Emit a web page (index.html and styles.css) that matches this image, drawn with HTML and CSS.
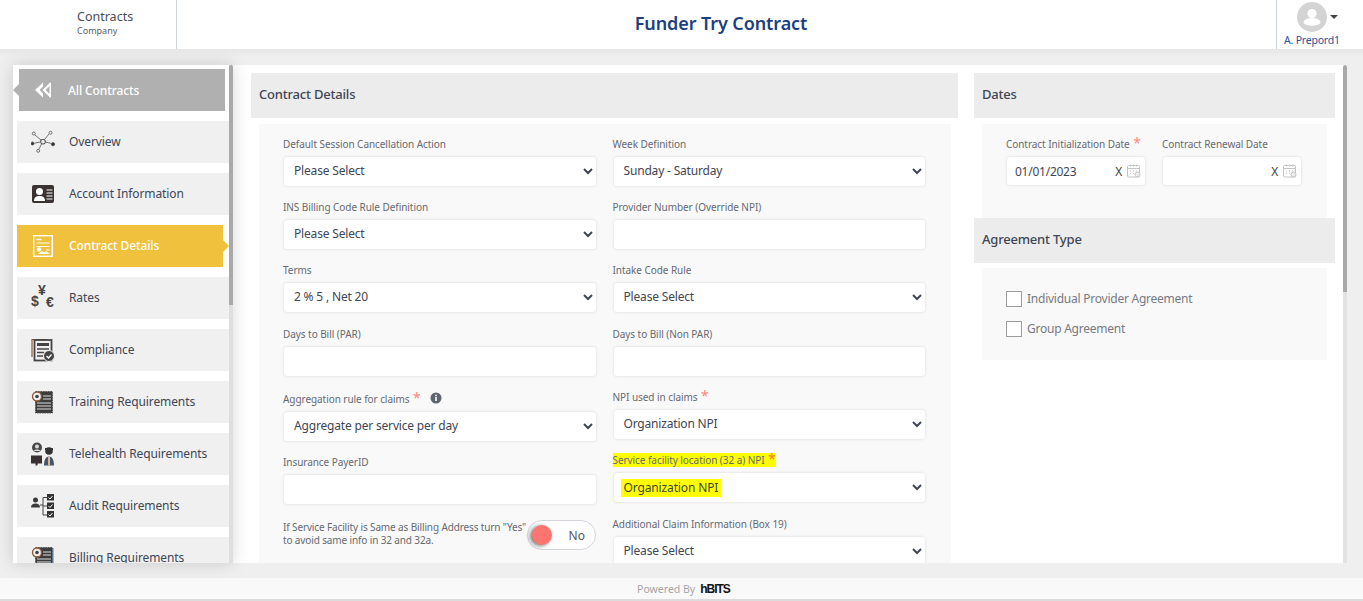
FILE: index.html
```html
<!DOCTYPE html>
<html lang="en">
<head>
<meta charset="utf-8">
<title>Funder Try Contract</title>
<link rel="stylesheet" href="styles.css">
</head>
<body>
<header class="topbar">
  <div class="brand">
    <div class="brand-title">Contracts</div>
    <div class="brand-sub">Company</div>
  </div>
  <h1 class="page-title">Funder Try Contract</h1>
  <div class="user">
    <div class="user-top">
      <svg class="avatar" viewBox="0 0 30 30"><circle cx="15" cy="15" r="15" fill="#d4d4d4"/><circle cx="15" cy="11.5" r="4.6" fill="#fff"/><path d="M6.5 21c0-3.500 4-5 8.500-5s8.500 1.500 8.500 5c-2 1.800-5 2.800-8.500 2.800S8.500 22.800 6.500 21z" fill="#fff"/></svg>
      <span class="caret"></span>
    </div>
    <div class="user-name">A. Prepord1</div>
  </div>
</header>

<div class="workspace">
  <nav class="sidebar">
    <div class="nav-scroll">
      <a class="back-item"><svg class="back-icon" viewBox="0 0 16 16"><path d="M8 .5 0 8l8 7.500V11.500L4.500 8 8 4.500z" fill="#fff"/><path d="M15 .5 7.500 8l7.500 7.500h1V.5zM14.500 4v8L10.500 8z" fill="#fff" fill-rule="evenodd"/></svg><span>All Contracts</span></a>

      <a class="nav-item"><svg class="nav-icon" viewBox="0 0 24 24" fill="none" stroke="#555" stroke-width=".8"><rect x="9.800" y="9.500" width="4.400" height="4.400" rx="1.500" stroke="#333" stroke-width="1"/><circle cx="2.800" cy="3.500" r="1.500"/><circle cx="19.500" cy="2.700" r="1.500"/><circle cx="7.200" cy="20.800" r="1.500"/><circle cx="1.500" cy="13.500" r="1.500" fill="#2b2b2b"/><circle cx="22" cy="14.200" r="1.600" fill="#2b2b2b"/><path d="M4 5l6 5M18 4l-4.500 5.500M3.500 13.200 9.500 12M20.500 13.500 14.500 12M8 19l2.500-5"/></svg><span class="nav-text">Overview</span></a>

      <a class="nav-item"><svg class="nav-icon" viewBox="0 0 24 24"><rect x="1" y="3" width="22" height="18" rx="2" fill="#3a3332"/><circle cx="8.500" cy="9.500" r="3.500" fill="#fff"/><path d="M3 19c0-4 2.500-5 5.500-5s5.500 1 5.500 5z" fill="#fff"/><path d="M15.500 8h6M15.500 11h6M15.500 14h6M15.500 17h6" stroke="#bbb" stroke-width="1.400"/></svg><span class="nav-text">Account Information</span></a>

      <a class="nav-item is-active"><svg class="nav-icon" viewBox="0 0 24 24" fill="none" stroke="#fff" stroke-width="1.400"><rect x="2.700" y="1.700" width="18.600" height="20.600"/><path d="M5.500 5.500h5" stroke-width="1.500"/><path d="M5.500 9h13M5.500 12.500h13M15 16h3.500" stroke-width="1.100"/><circle cx="8" cy="15.500" r="2.200" fill="#fff" stroke="none"/><path d="M7 20l4-3 2 1.500 2-1.500 4 3z" fill="#fff" stroke="none"/></svg><span class="nav-text">Contract Details</span></a>

      <a class="nav-item"><span class="nav-icon money"><b class="yen">¥</b><b class="dollar">$</b><b class="euro">€</b></span><span class="nav-text">Rates</span></a>

      <a class="nav-item"><svg class="nav-icon" viewBox="0 0 24 24"><path d="M1 19V1.500h15" fill="none" stroke="#8a5a3c" stroke-width="1.200"/><rect x="3.500" y="2" width="17" height="20.500" fill="none" stroke="#444" stroke-width="1.800"/><path d="M6 5h12v3H6z" fill="#444"/><path d="M6 11h12M6 14.500h7M6 18h6" stroke="#444" stroke-width="1.600"/><circle cx="18" cy="18" r="5.500" fill="#444" stroke="#f0f0f0"/><path d="M15.500 18l2 2 3-3.500" fill="none" stroke="#fff" stroke-width="1.300"/></svg><span class="nav-text">Compliance</span></a>

      <a class="nav-item"><svg class="nav-icon" viewBox="0 0 24 24"><rect x="4.500" y="1.500" width="17" height="21.500" fill="#3c3c3c" stroke="#555" stroke-dasharray="1.500 1"/><path d="M12 6h8M12 9h8M6 13h14M6 16h14M6 19h14" stroke="#ddd" stroke-width="1"/><circle cx="6" cy="6.500" r="4.500" fill="#f0f0f0" stroke="#8a5a3c" stroke-width="1.300"/><circle cx="6" cy="6.500" r="1.800" fill="#444"/></svg><span class="nav-text">Training Requirements</span></a>

      <a class="nav-item"><svg class="nav-icon" viewBox="0 0 24 24"><circle cx="6" cy="5.500" r="5" fill="#4a4a4a"/><circle cx="6" cy="4.500" r="2" fill="#ddd"/><path d="M2.500 9c1-2 6-2 7 0z" fill="#ddd"/><rect x="0" y="13.500" width="11" height="8" fill="#3a3030"/><rect x="4.500" y="21" width="2" height="2.500" fill="#3a3030"/><circle cx="18" cy="9" r="3.800" fill="#333"/><path d="M14 7h8" stroke="#333" stroke-width="2"/><path d="M13 23.500c0-6 2-9 5-9s5 3 5 9z" fill="#44566a"/><path d="M17 15h2v8.500h-2z" fill="#d8b998"/></svg><span class="nav-text">Telehealth Requirements</span></a>

      <a class="nav-item"><svg class="nav-icon" viewBox="0 0 24 24"><circle cx="4.500" cy="6" r="2.500" fill="#3a3a3a"/><path d="M0 13.500c0-3 2-4 4.500-4s4.500 1 4.500 4z" fill="#3a3a3a"/><path d="M9 11h3M12 3.500v17.500M12 3.500h4M12 12h4M12 21h4" stroke="#444" stroke-width="1" fill="none"/><rect x="16" y="0" width="7" height="6.500" fill="#333"/><rect x="16" y="8.500" width="7" height="6.500" fill="#333"/><rect x="16" y="17" width="7" height="6.500" fill="#333"/><path d="M17.500 3.500l1.500 1.500 2.500-3M17.500 12l1.500 1.500 2.500-3M17.500 20.500 19 22l2.500-3" stroke="#fff" fill="none" stroke-width="1"/></svg><span class="nav-text">Audit Requirements</span></a>

      <a class="nav-item"><svg class="nav-icon" viewBox="0 0 24 24"><rect x="4.500" y="1.500" width="17" height="21.500" fill="#3c3c3c" stroke="#555" stroke-dasharray="1.500 1"/><path d="M12 6h8M12 9h8M6 13h14M6 16h14M6 19h14" stroke="#ddd" stroke-width="1"/><path d="M22 2v21" stroke="#4a7fb0"/><circle cx="6" cy="6.500" r="4.500" fill="#f0f0f0" stroke="#8a5a3c" stroke-width="1.300"/><circle cx="6" cy="6.500" r="1.800" fill="#444"/></svg><span class="nav-text">Billing Requirements</span></a>
    </div>
  </nav>

  <main class="main">
    <section class="details">
      <h2 class="section-head">Contract Details</h2>
      <div class="details-body">
        <div class="col col-left">
          <div class="field"><label>Default Session Cancellation Action</label><select><option>Please Select</option></select></div>
          <div class="field"><label>INS Billing Code Rule Definition</label><select><option>Please Select</option></select></div>
          <div class="field"><label>Terms</label><select><option>2 % 5 , Net 20</option></select></div>
          <div class="field"><label>Days to Bill (PAR)</label><input type="text"></div>
          <div class="field field-tall"><label>Aggregation rule for claims <i class="req">*</i>
            <svg class="info" viewBox="0 0 12 12"><circle cx="6" cy="6" r="5.500" fill="#5f6570"/><rect x="5.200" y="5" width="1.600" height="4" fill="#fff"/><rect x="5.200" y="2.700" width="1.600" height="1.500" fill="#fff"/></svg></label><select><option>Aggregate per service per day</option></select></div>
          <div class="field"><label>Insurance PayerID</label><input type="text"></div>
          <div class="toggle-row">
            <p class="toggle-text">If Service Facility is Same as Billing Address turn "Yes"<br>to avoid same info in 32 and 32a.</p>
            <div class="toggle"><span class="knob"></span><span class="toggle-label">No</span></div>
          </div>
        </div>
        <div class="col col-right">
          <div class="field"><label>Week Definition</label><select><option>Sunday - Saturday</option></select></div>
          <div class="field"><label>Provider Number (Override NPI)</label><input type="text"></div>
          <div class="field"><label>Intake Code Rule</label><select><option>Please Select</option></select></div>
          <div class="field"><label>Days to Bill (Non PAR)</label><input type="text"></div>
          <div class="field"><label>NPI used in claims <i class="req">*</i></label><select><option>Organization NPI</option></select></div>
          <div class="field highlighted">
            <label><mark>Service facility location (32 a) NPI <i class="req req-hl">*</i></mark></label>
            <div class="select-wrap"><select><option></option></select><mark class="select-mark">Organization NPI</mark></div>
          </div>
          <div class="field"><label>Additional Claim Information (Box 19)</label><select><option>Please Select</option></select></div>
        </div>
      </div>
    </section>

    <aside class="side-sections">
      <h2 class="section-head">Dates</h2>
      <div class="dates-body">
        <div class="date-field">
          <label>Contract Initialization Date <i class="req">*</i></label>
          <div class="date-input"><span class="date-value">01/01/2023</span><span class="clear">X</span>
            <svg class="cal" viewBox="0 0 14 14" fill="none" stroke="#c4c4c4"><rect x=".5" y="1.500" width="12" height="11.500" rx="1"/><path d="M.5 4.500h12M3.500 .5v2M6.500 .5v2M9.500 .5v2M3 7h1M6 7h1M9 7h1M3 9.500h1M6 9.500h1"/><circle cx="10.500" cy="10.500" r="2.500" fill="#eee"/></svg></div>
        </div>
        <div class="date-field">
          <label>Contract Renewal Date</label>
          <div class="date-input"><span class="date-value"></span><span class="clear">X</span>
            <svg class="cal" viewBox="0 0 14 14" fill="none" stroke="#c4c4c4"><rect x=".5" y="1.500" width="12" height="11.500" rx="1"/><path d="M.5 4.500h12M3.500 .5v2M6.500 .5v2M9.500 .5v2M3 7h1M6 7h1M9 7h1M3 9.500h1M6 9.500h1"/><circle cx="10.500" cy="10.500" r="2.500" fill="#eee"/></svg></div>
        </div>
      </div>
      <h2 class="section-head">Agreement Type</h2>
      <div class="agreement-body">
        <label class="check"><span class="box"></span>Individual Provider Agreement</label>
        <label class="check"><span class="box"></span>Group Agreement</label>
      </div>
    </aside>
    <div class="main-scroll"></div>
  </main>
</div>

<footer class="footer"><span>Powered By</span><b class="hbits">hBITS</b></footer>
</body>
</html>
```

FILE: styles.css
```css
* { box-sizing: border-box; }
html, body { margin: 0; height: 601px; overflow: hidden; }
body {
  display: flex;
  flex-direction: column;
  font-family: "Noto Sans", sans-serif;
  background: #ececec;
  color: #3f4655;
}

/* Header */
.topbar {
  height: 49px;
  flex: none;
  background: #fff;
  display: flex;
  align-items: stretch;
}
.brand {
  width: 177px;
  padding: 9px 0 0 77px;
  border-right: 1px solid #ced3da;
  flex: none;
}
.brand-title { font-size: 12.500px; line-height: 16px; color: #4a4f58; }
.brand-sub { font-size: 9px; line-height: 12px; color: #5c6068; }
.page-title {
  flex: 1;
  margin: 0;
  padding-right: 11px;
  text-align: center;
  font-size: 18px;
  letter-spacing: -.1px;
  line-height: 47px;
  font-weight: 600;
  color: #1d3f80;
}
.user {
  width: 87px;
  flex: none;
  border-left: 1px solid #ced3da;
  padding: 2px 0 0 7px;
}
.user-top { display: flex; align-items: center; padding-left: 13px; }
.avatar { width: 30px; height: 30px; display: block; }
.caret {
  margin-left: 3px;
  border: 4px solid transparent;
  border-top-color: #444;
  border-bottom: 0;
}
.user-name { font-size: 10.500px; letter-spacing: -.2px; line-height: 14px; color: #2a5296; margin-top: 1px; }

/* Workspace */
.workspace {
  height: 529px;
  flex: none;
  padding: 16px 16px 15px 13px;
  display: flex;
  background: linear-gradient(#e6e6e6, #efefef 8px);
}
.sidebar {
  width: 220px;
  flex: none;
  background: #fff;
  padding-right: 4px;
  box-shadow: 0 0 16px rgba(0,0,0,.16);
  position: relative;
  z-index: 1;
}
.sidebar::before,
.sidebar::after {
  content: "";
  position: absolute;
  right: 0;
  top: 0;
  width: 4px;
}
.sidebar::before { bottom: 0; background: #dfdfdf; }
.sidebar::after { height: 240px; background: #a9a9a9; border-radius: 2px 2px 0 0; }
.nav-scroll {
  height: 100%;
  overflow: hidden;
  padding: 4px 0 0 4px;
  display: flex;
  flex-direction: column;
  gap: 10px;
}
.nav-item, .back-item {
  height: 42px;
  flex: none;
  display: flex;
  align-items: center;
  font-size: 12px;
  letter-spacing: -.1px;
  position: relative;
}
.nav-text { padding-bottom: 2px; }
.nav-item { background: #f0f0f0; padding-left: 14px; color: #3f4655; }
.nav-icon { width: 24px; height: 24px; margin-right: 14px; flex: none; display: block; }
.back-item {
  margin-left: 2px;
  width: 206px;
  background: #b0b0b0;
  color: #fff;
  font-weight: 500;
  padding-left: 16px;
}
.back-item::before {
  content: "";
  position: absolute;
  left: -6px;
  top: 15px;
  border: 6px solid transparent;
  border-right-color: #b0b0b0;
  border-left: 0;
}
.back-icon { width: 16px; height: 16px; margin-right: 17px; }
.is-active {
  background: #f0c13c;
  color: #fff;
  width: 206px;
  font-weight: 500;
}
.is-active::after {
  content: "";
  position: absolute;
  right: -6px;
  top: 15px;
  border: 6px solid transparent;
  border-left-color: #f0c13c;
  border-right: 0;
}
.money { position: relative; }
.money b { position: absolute; font-family: "Liberation Sans", sans-serif; font-weight: 700; color: #444; font-size: 14px; line-height: 14px; }
.yen { left: 7px; top: -3px; }
.dollar { left: 0; top: 8px; }
.euro { left: 15px; top: 9px; }

/* Main panel */
.main {
  flex: 1;
  min-width: 0;
  background: #fff;
  display: flex;
  padding: 8px 12px 0 18px;
  gap: 16px;
  overflow: hidden;
  position: relative;
}
.main-scroll {
  position: absolute;
  right: 0;
  top: 0;
  bottom: 0;
  width: 4px;
  background: linear-gradient(#a9a9a9 227px, #e2e2e2 227px);
  border-radius: 2px 2px 0 0;
}
.details { width: 707px; flex: none; }
.section-head {
  margin: 0;
  height: 45px;
  background: #ececec;
  padding-left: 8px;
  font-size: 13px;
  letter-spacing: -.2px;
  line-height: 43px;
  font-weight: 500;
  color: #3f4655;
}
.details-body {
  margin: 6px 7px 0 8px;
  background: #f9f9f9;
  padding: 11.800px 25px 0 24px;
  display: flex;
  gap: 16px;
  height: 500px;
}
.col { flex: 1; min-width: 0; }
.field { height: 63.300px; }
.field label, .date-field label {
  display: block;
  height: 20px;
  font-size: 10px;
  letter-spacing: -.06px;
  line-height: 16px;
  color: #666a72;
  white-space: nowrap;
}
.field-tall { height: 65px; }
.field-tall label { height: 22px; padding-top: 2px; }
.req {
  color: #f9877d;
  font-style: normal;
  font-size: 14px;
  line-height: 10px;
  margin-left: 1px;
}
.info { width: 12px; height: 12px; margin-left: 7px; vertical-align: -1px; }
select, input, .date-input {
  display: block;
  width: calc(100% - 2px);
  height: 29px;
  margin: 1px 1px 0;
  border: 0;
  border-radius: 3px;
  background-color: #fff;
  box-shadow: 0 0 3px rgba(0,0,0,.14);
  font-family: "Noto Sans", sans-serif;
  font-size: 12px;
  letter-spacing: -.18px;
  color: #3f4655;
  padding: 0 6px 2px;
  outline: 0;
}
mark { background: #ffff00; color: inherit; }
.req-hl { color: #f97a30; }
.select-wrap { position: relative; }
.select-mark {
  position: absolute;
  left: 8px;
  top: 6px;
  font-size: 12px;
  letter-spacing: -.13px;
  line-height: 18px;
  padding: 0 3px;
  color: #3f4635;
  pointer-events: none;
}
.toggle-row { display: flex; align-items: flex-start; position: relative; margin-top: 4px; }
.toggle-text {
  margin: 0;
  font-size: 10px;
  letter-spacing: -.13px;
  line-height: 13px;
  color: #666a72;
  width: 250px;
  flex: none;
  white-space: nowrap;
}
.toggle {
  margin-left: -6px;
  margin-top: -1px;
  width: 69px;
  height: 30px;
  border: 1px solid #d4d6dc;
  border-radius: 15px;
  background: #fff;
  display: flex;
  align-items: center;
  justify-content: space-between;
  padding: 0 10px 0 4px;
  font-size: 12px;
  color: #555;
}
.knob {
  width: 20px;
  height: 20px;
  border-radius: 50%;
  background: #fe7470;
  box-shadow: -2px 1px 4px rgba(0,0,0,.55);
}

/* Right column */
.side-sections { flex: 1; min-width: 0; }
.dates-body {
  margin: 6px 8px 0;
  background: #f9f9f9;
  height: 94px;
  padding: 12px 24px 0;
  display: flex;
  gap: 16px;
}
.date-field { width: 140px; flex: none; }
.date-input {
  display: flex;
  align-items: center;
  padding: 0 4px 0 8px;
  height: 28px;
  margin-top: 1px;
}
.date-value { flex: 1; letter-spacing: -.25px; }
.clear { font-size: 12px; margin-right: 5px; color: #444; }
.cal { width: 14px; height: 14px; }
.agreement-body {
  margin: 5px 8px 0;
  background: #f9f9f9;
  height: 92px;
  padding: 23px 24px 0;
  display: flex;
  flex-direction: column;
  gap: 14px;
}
.check { display: flex; align-items: center; gap: 5px; font-size: 12px; letter-spacing: -.24px; line-height: 16px; color: #777a82; }
.box { width: 16px; height: 16px; border: 1px solid #9c9c9c; background: #fff; }

/* Footer */
.footer {
  height: 23px;
  flex: none;
  background: #f9f9f9;
  display: flex;
  align-items: center;
  justify-content: center;
  gap: 5px;
  padding: 0 0 0 4px;
  font-size: 10.500px;
  color: #a5a5a5;
  border-bottom: 2px solid #dcdcdc;
}
.hbits { color: #111; font-family: "Liberation Sans", sans-serif; font-size: 12px; letter-spacing: -1px; }
```
